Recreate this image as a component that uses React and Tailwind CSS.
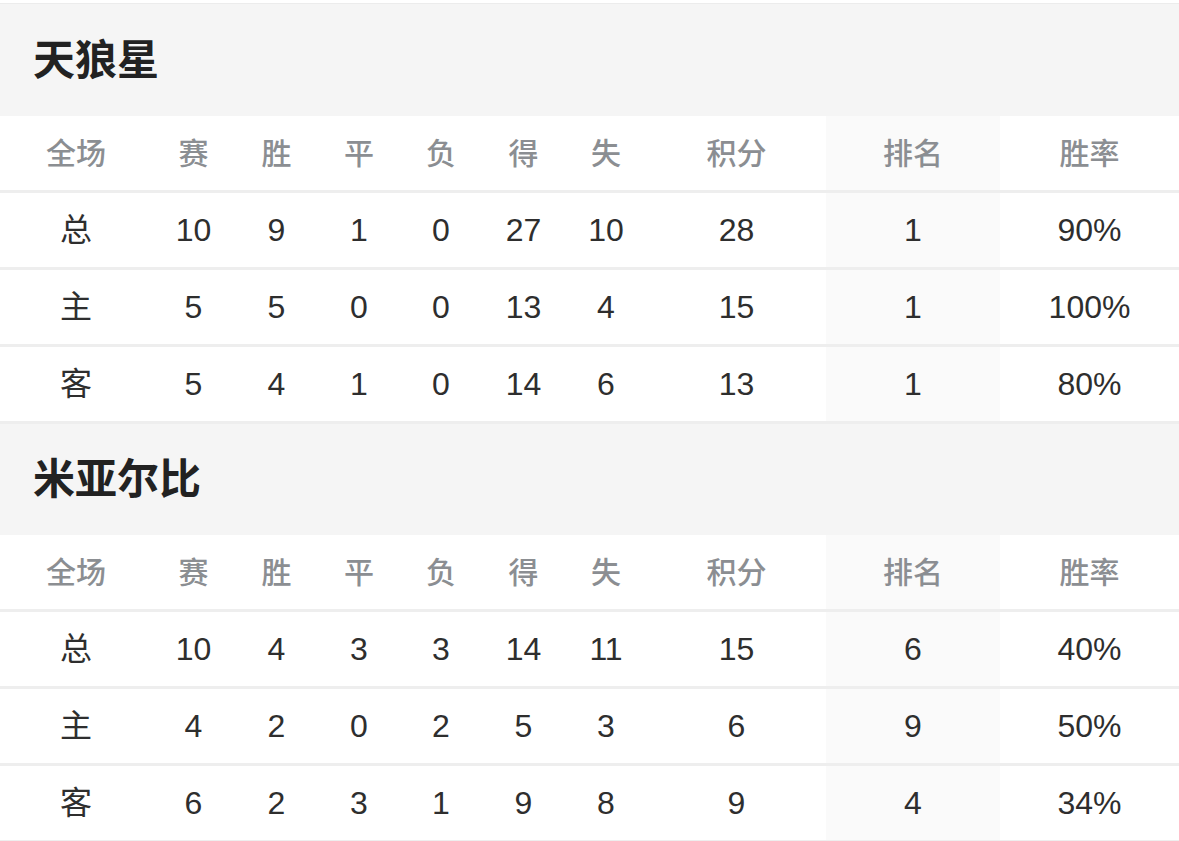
import React from "react";

const COLS =
  "grid grid-cols-[152px_83px_83px_82px_82px_83px_82px_179px_174px_179px]";

const HEAD = ["全场", "赛", "胜", "平", "负", "得", "失", "积分", "排名", "胜率"];

const teams = [
  {
    name: "天狼星",
    rows: [
      ["总", "10", "9", "1", "0", "27", "10", "28", "1", "90%"],
      ["主", "5", "5", "0", "0", "13", "4", "15", "1", "100%"],
      ["客", "5", "4", "1", "0", "14", "6", "13", "1", "80%"],
    ],
  },
  {
    name: "米亚尔比",
    rows: [
      ["总", "10", "4", "3", "3", "14", "11", "15", "6", "40%"],
      ["主", "4", "2", "0", "2", "5", "3", "6", "9", "50%"],
      ["客", "6", "2", "3", "1", "9", "8", "9", "4", "34%"],
    ],
  },
];

const Row = ({ cells, head }) => (
  <div className={`${COLS} ${head ? "h-[74px]" : "h-[77px] border-t-[3px] border-[#eeeeee]"}`}>
    {cells.map((c, i) => (
      <div
        key={i}
        className={`flex items-center justify-center ${i === 8 ? "bg-[#fafafa]" : ""} ${
          head ? "text-[30px] font-medium text-[#8b8e92]" : "text-[32px] text-[#2e2e2e]"
        }`}
      >
        {c}
      </div>
    ))}
  </div>
);

export default function App() {
  return (
    <div
      className="w-[1179px] h-[841px] bg-white overflow-hidden pt-[3px]"
      style={{ fontFamily: '"Liberation Sans", "Noto Sans CJK SC", sans-serif' }}
    >
      {teams.map((t, ti) => (
        <div key={t.name}>
          <div
            className={`bg-[#f5f5f5] flex items-center pl-[33px] ${
              ti === 0 ? "h-[113px] border-t border-[#ececec]" : "h-[114px] border-t-[3px] border-[#eeeeee]"
            }`}
          >
            <span className="text-[42px] font-bold text-[#222222]">{t.name}</span>
          </div>
          <Row cells={HEAD} head />
          {t.rows.map((r, i) => (
            <Row key={i} cells={r} />
          ))}
        </div>
      ))}
      <div className="border-t-[3px] border-[#eeeeee]" />
    </div>
  );
}
